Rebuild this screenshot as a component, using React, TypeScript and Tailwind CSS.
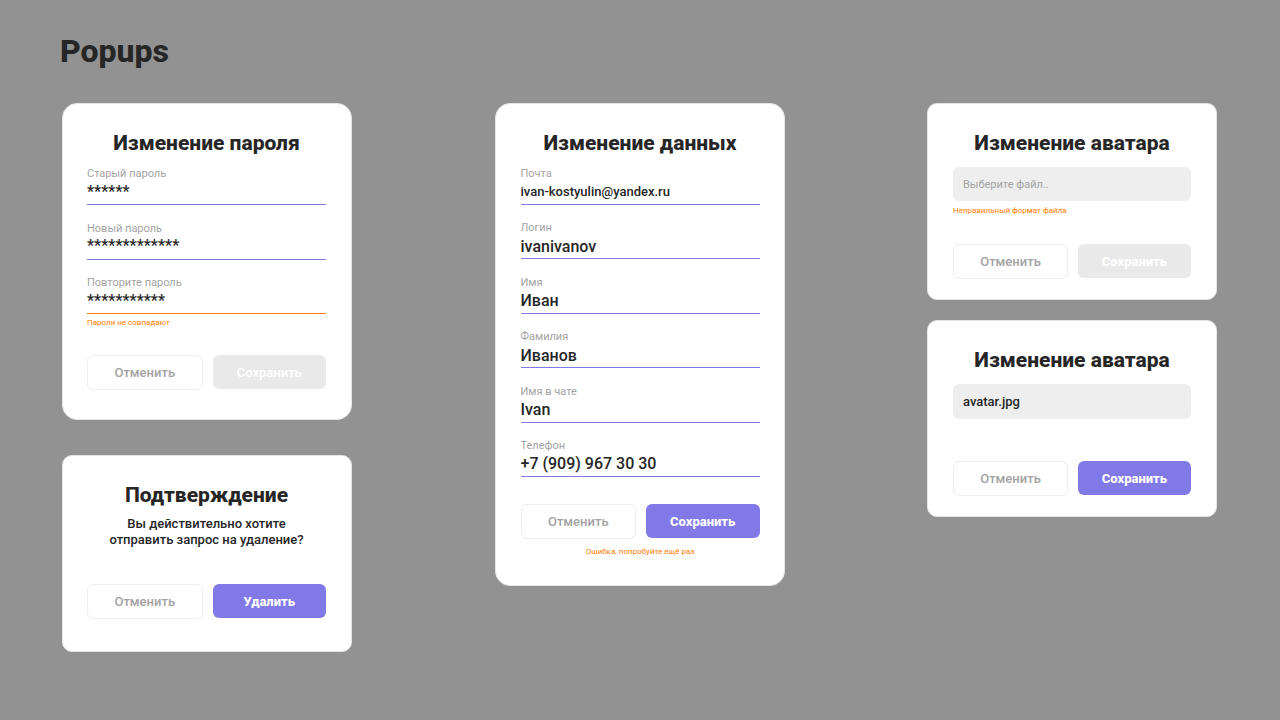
import type { ReactNode } from "react";
import { useId, useState } from "react";

type CardProps = { title: string; className: string; children: ReactNode };

function Card({ title, className, children }: CardProps) {
  return (
    <section className={`flex w-[290px] flex-col border border-[#e6e6e6] bg-white pt-[27px] ${className}`}>
      <h2 className="mb-3 text-center text-[21px] leading-6 font-extrabold">{title}</h2>
      {children}
    </section>
  );
}

type FieldProps = { label: string; value: string; size?: string; line?: string };

function Field({ label, value, size = "text-base", line = "border-[#8279e8]" }: FieldProps) {
  const id = useId();
  const [text, setText] = useState(value);
  return (
    <div className="flex flex-col">
      <label htmlFor={id} className="text-[11px] leading-[14px] text-[#a3a3a3]">
        {label}
      </label>
      <input
        id={id}
        value={text}
        onChange={(e) => setText(e.target.value)}
        className={`h-6 w-full border-b bg-transparent font-medium outline-none ${line} ${size}`}
      />
    </div>
  );
}

function FilePicker({ children, className }: { children: ReactNode; className: string }) {
  return (
    <button type="button" className={`w-full rounded-md bg-[#eeeeee] px-[10px] text-left ${className}`}>
      {children}
    </button>
  );
}

function ErrorText({ children, className = "" }: { children: ReactNode; className?: string }) {
  return <p className={`text-[8px] leading-[10px] text-[#ff7a00] ${className}`}>{children}</p>;
}

type ActionsProps = { submit: string; className: string; disabled?: boolean; weight?: string };

function Actions({ submit, className, disabled = false, weight = "font-extrabold" }: ActionsProps) {
  return (
    <div className={`flex items-start gap-[10px] text-[13px] ${className}`}>
      <button type="button" className="h-[35px] flex-1 rounded-md border border-[#eeeeee] bg-white font-medium text-[#a3a3a3]">
        Отменить
      </button>
      <button
        type="submit"
        disabled={disabled}
        className={`h-[34px] flex-1 rounded-md bg-[#8279e8] pt-0.5 text-white disabled:bg-[#e9e9e9] ${weight}`}
      >
        {submit}
      </button>
    </div>
  );
}

export default function App() {
  return (
    <main className="min-h-screen bg-[#929292] pt-[31px] pr-[63px] pb-8 pl-[62px] font-['Roboto',sans-serif] text-[#262626]">
      <h1 className="-ml-0.5 text-[32px] leading-10 font-extrabold">Popups</h1>
      <div className="mt-8 flex items-start justify-between">
        <div className="flex flex-col gap-[35px]">
          <Card title="Изменение пароля" className="rounded-[15px] pr-[25px] pb-[29px] pl-6">
            <div className="flex h-[147px] flex-col justify-between">
              <Field label="Старый пароль" value="******" size="pb-0.5 text-base" />
              <Field label="Новый пароль" value="*************" size="pb-0.5 text-base" />
              <Field label="Повторите пароль" value="***********" size="pb-0.5 text-base" line="border-[#ff7a00]" />
            </div>
            <ErrorText className="mt-1">Пароли не совпадают</ErrorText>
            <Actions submit="Сохранить" disabled weight="font-medium" className="mt-[27px]" />
          </Card>
          <Card title="Подтверждение" className="rounded-[10px] pr-[25px] pb-8 pl-6">
            <p className="-mt-[3px] text-center text-[13px] leading-4 font-medium">
              Вы действительно хотите
              <br />
              отправить запрос на удаление?
            </p>
            <Actions submit="Удалить" className="mt-9" />
          </Card>
        </div>
        <Card title="Изменение данных" className="rounded-[15px] pr-6 pb-[29px] pl-[25px]">
          <div className="flex h-[310px] flex-col justify-between">
            <Field label="Почта" value="ivan-kostyulin@yandex.ru" size="pb-0.5 text-[13px]" />
            <Field label="Логин" value="ivanivanov" />
            <Field label="Имя" value="Иван" />
            <Field label="Фамилия" value="Иванов" />
            <Field label="Имя в чате" value="Ivan" />
            <Field label="Телефон" value="+7 (909) 967 30 30" />
          </div>
          <Actions submit="Сохранить" className="mt-[27px]" />
          <ErrorText className="mt-2 -mb-px text-center">Ошибка, попробуйте ещё раз</ErrorText>
        </Card>
        <div className="flex flex-col gap-5">
          <Card title="Изменение аватара" className="rounded-[10px] px-[25px] pb-5">
            <FilePicker className="h-[34px] pt-0.5 text-[11px] text-[#a3a3a3]">Выберите файл..</FilePicker>
            <ErrorText className="mt-[5px]">Неправильный формат файла</ErrorText>
            <Actions submit="Сохранить" disabled className="mt-7" />
          </Card>
          <Card title="Изменение аватара" className="rounded-[10px] px-[25px] pb-5">
            <FilePicker className="h-[35px] text-[13px] font-medium">avatar.jpg</FilePicker>
            <Actions submit="Сохранить" className="mt-[42px]" />
          </Card>
        </div>
      </div>
    </main>
  );
}
